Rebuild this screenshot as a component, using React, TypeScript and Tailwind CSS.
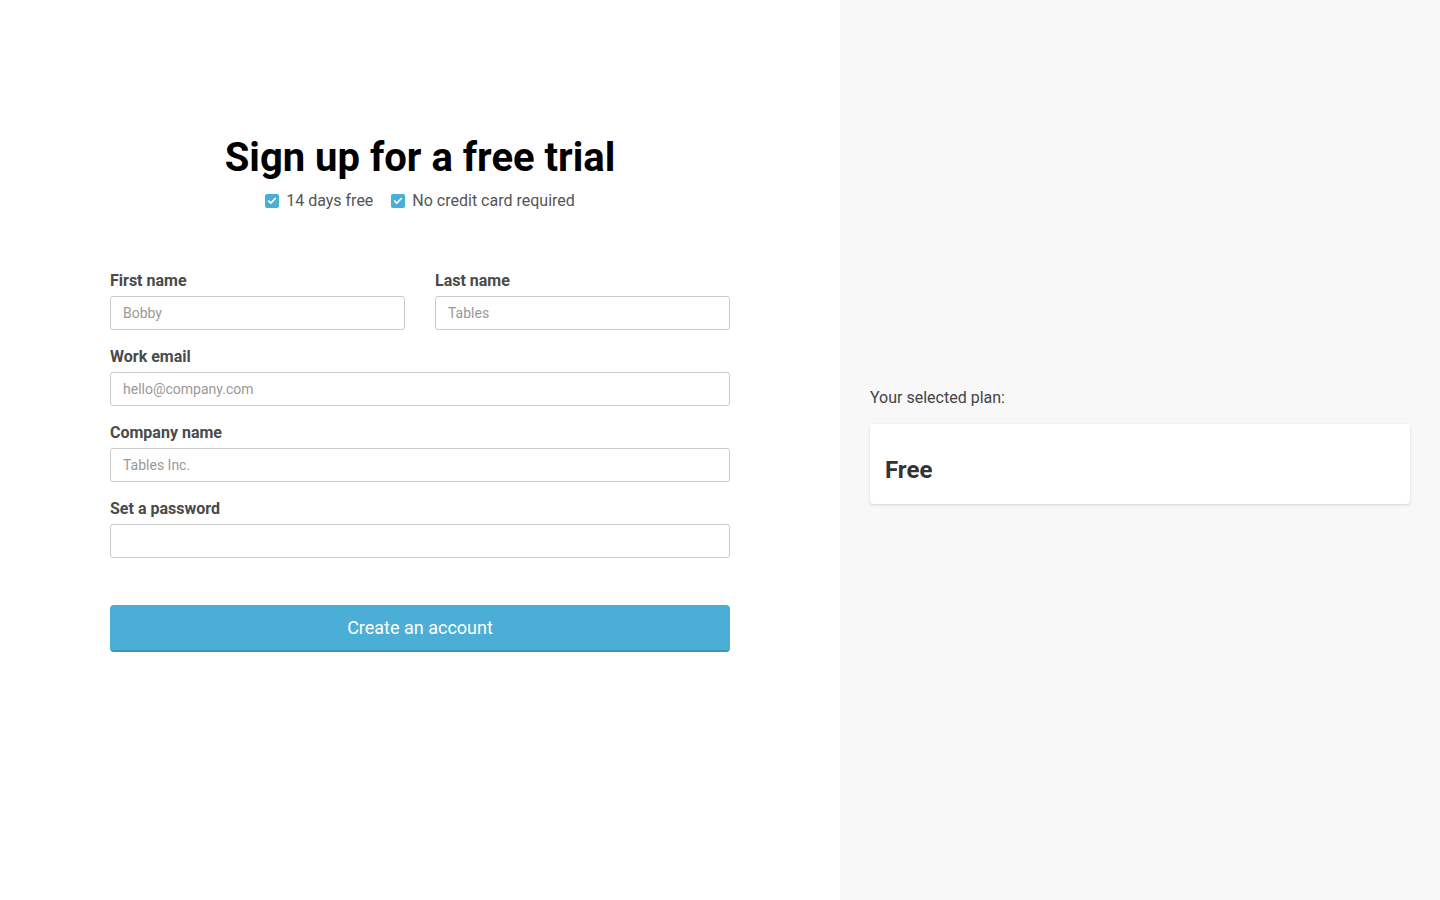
import { Check } from 'lucide-react';

function CheckItem({ label }: { label: string }) {
    return (
        <span className="flex items-center gap-[7px]">
            <span className="flex items-center justify-center w-[14px] h-[14px] rounded-[2px] bg-[#4aaed6]">
                <Check className="w-[10px] h-[10px] text-white" strokeWidth={4} />
            </span>
            <span>{label}</span>
        </span>
    );
}

function Field({ label, placeholder, type = 'text' }: { label: string; placeholder?: string; type?: string }) {
    return (
        <div className="flex flex-col flex-1">
            <label className="text-base font-bold text-[#4a4a4a] leading-6 mb-[3px]">{label}</label>
            <input
                type={type}
                placeholder={placeholder}
                className="h-[34px] w-full border border-[#ccc] rounded-[3px] px-3 text-sm text-[#333] placeholder:text-[#999] bg-white outline-none"
            />
        </div>
    );
}

export default function App() {
    return (
        <div className="flex min-h-[900px] w-full" style={{ fontFamily: 'Roboto, "Liberation Sans", sans-serif' }}>
            {/* Form side */}
            <div className="w-[840px] bg-white flex flex-col items-center pt-[134px]">
                <h1 className="text-[40px] leading-[48px] font-bold text-black">Sign up for a free trial</h1>
                <div className="flex items-center gap-[18px] text-base text-[#555] mt-[7px]">
                    <CheckItem label="14 days free" />
                    <CheckItem label="No credit card required" />
                </div>

                <form className="w-[620px] mt-[56px] flex flex-col gap-[15px]">
                    <div className="flex gap-[30px]">
                        <Field label="First name" placeholder="Bobby" />
                        <Field label="Last name" placeholder="Tables" />
                    </div>
                    <Field label="Work email" placeholder="hello@company.com" />
                    <Field label="Company name" placeholder="Tables Inc." />
                    <Field label="Set a password" type="password" />
                    <button
                        type="button"
                        className="mt-[32px] h-[47px] w-full rounded-[4px] bg-[#4aaed6] border-b-2 border-[#3a95bd] text-white text-lg"
                    >
                        Create an account
                    </button>
                </form>
            </div>

            {/* Plan side */}
            <div className="flex-1 bg-[#f8f8f8] px-[30px] pt-[386px]">
                <p className="text-base text-[#444] leading-6">Your selected plan:</p>
                <div className="mt-[14px] h-[80px] bg-white rounded-[4px] shadow-[0_1px_3px_rgba(0,0,0,0.15)] flex items-end px-[15px] pb-[18px]">
                    <span className="text-2xl font-bold text-[#333]">Free</span>
                </div>
            </div>
        </div>
    );
}
